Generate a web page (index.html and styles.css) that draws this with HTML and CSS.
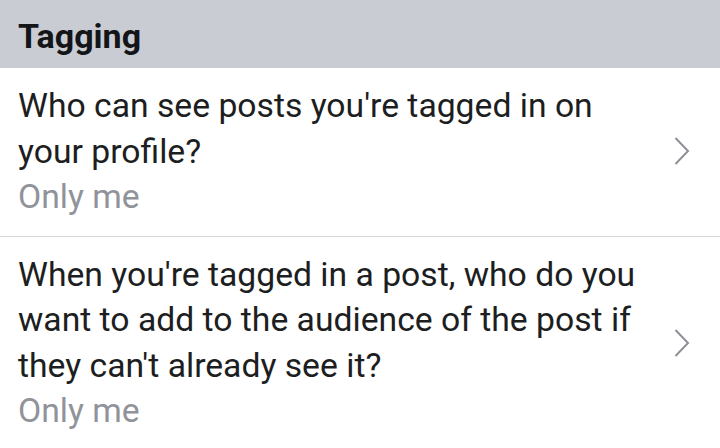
FILE: index.html
```html
<!DOCTYPE html>
<html>
<head>
<meta charset="utf-8">
<link rel="stylesheet" href="styles.css">
</head>
<body>
<div class="header">Tagging</div>
<div class="row">
  <div class="text">
    <div class="title">Who can see posts you're tagged in on your profile?</div>
    <div class="value">Only me</div>
  </div>
  <svg class="chev" width="16" height="28" viewBox="0 0 16 28"><path d="M1.5 1 L14 14 L1.5 27" fill="none" stroke="#8d9096" stroke-width="2"/></svg>
</div>
<div class="row">
  <div class="text">
    <div class="title">When you're tagged in a post, who do you want to add to the audience of the post if they can't already see it?</div>
    <div class="value">Only me</div>
  </div>
  <svg class="chev" width="16" height="28" viewBox="0 0 16 28"><path d="M1.5 1 L14 14 L1.5 27" fill="none" stroke="#8d9096" stroke-width="2"/></svg>
</div>
</body>
</html>
```
FILE: styles.css
```css
html, body { margin: 0; padding: 0; background: #fff; }
body { width: 720px; height: 448px; overflow: hidden; font-family: Roboto, "Noto Sans", sans-serif; }
.header {
  background: #c9ccd3;
  height: 68px;
  box-sizing: border-box;
  padding: 16px 18px 0;
  font-weight: bold;
  font-size: 34px;
  line-height: 41px;
  color: #141518;
}
.row {
  display: flex;
  align-items: center;
  padding: 15px 30px 16px 18px;
  border-bottom: 1px solid #d5d7db;
}
.text { flex: 1; max-width: 632px; }
.title { font-size: 33.7px; line-height: 45.5px; color: #1c1e21; }
.value { font-size: 33.7px; line-height: 45.5px; color: #909399; }
.chev { flex: none; margin-left: auto; }
```
